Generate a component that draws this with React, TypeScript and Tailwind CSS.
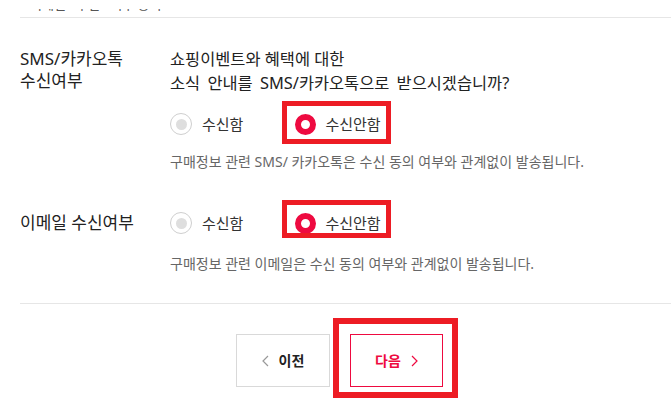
import React from "react";

const font = { fontFamily: '"Noto Sans", "Noto Sans CJK KR", sans-serif' };

function RadioOff({ label }: { label: string }) {
  return (
    <div className="flex items-center gap-[10px]">
      <span className="flex h-[22px] w-[22px] items-center justify-center rounded-full border border-[#cfcfcf] bg-white">
        <span className="h-[11px] w-[11px] rounded-full bg-[#dedede]" />
      </span>
      <span className="text-[15px] text-[#333]">{label}</span>
    </div>
  );
}

function RadioOn({ label, boxClass }: { label: string; boxClass: string }) {
  return (
    <div className="relative flex items-center gap-[9px]">
      <span className="h-[21px] w-[21px] rounded-full border-[6px] border-[#ee0a40] bg-white" />
      <span className="text-[15px] text-[#333]">{label}</span>
      <span className={`pointer-events-none absolute border-[5px] border-[#ed1c24] ${boxClass}`} />
    </div>
  );
}

function Chevron({ dir, color }: { dir: "l" | "r"; color: string }) {
  return (
    <svg width="7" height="12" viewBox="0 0 7 12" fill="none">
      <polyline
        points={dir === "l" ? "6,1 1,6 6,11" : "1,1 6,6 1,11"}
        stroke={color}
        strokeWidth="1.2"
      />
    </svg>
  );
}

export default function App() {
  return (
    <div className="h-[404px] w-[671px] overflow-hidden bg-white" style={font}>
      <div className="pl-5">
        <div className="h-[9px]" />
        <div className="flex h-[2px] items-end overflow-hidden pl-[10px]">
          <span className="text-[13px] leading-none text-[#555]">이메일 · 수신 · 여부 동의</span>
        </div>
        <div className="h-[6px]" />
        <div className="border-t border-[#e6e6e6]" />

        <div className="flex pt-[29px]">
          <div className="w-[150px] pt-[1px] text-[17px] leading-[22px] text-[#222]">
            SMS/카카오톡
            <br />
            수신여부
          </div>
          <div className="flex flex-col">
            <div className="text-[16.4px] leading-[24px] text-[#222]">
              <div>쇼핑이벤트와 혜택에 대한</div>
              <div className="[word-spacing:3px]">소식 안내를 SMS/카카오톡으로 받으시겠습니까?</div>
            </div>
            <div className="mt-[14px] flex h-[30px] items-center gap-[52px]">
              <RadioOff label="수신함" />
              <RadioOn label="수신안함" boxClass="-left-[13px] -right-[10px] -top-[12px] -bottom-[9px]" />
            </div>
            <div className="mt-[13px] text-[14px] leading-[20px] text-[#666]">
              구매정보 관련 SMS/ 카카오톡은 수신 동의 여부와 관계없이 발송됩니다.
            </div>
          </div>
        </div>

        <div className="flex pt-[36px] pb-[29px]">
          <div className="w-[150px] text-[17px] leading-[30px] text-[#222]">이메일 수신여부</div>
          <div className="flex flex-col">
            <div className="flex h-[30px] items-center gap-[52px]">
              <RadioOff label="수신함" />
              <RadioOn label="수신안함" boxClass="-left-[13px] -right-[10px] -top-[12px] -bottom-[4px]" />
            </div>
            <div className="mt-[16px] text-[14px] leading-[20px] text-[#666]">
              구매정보 관련 이메일은 수신 동의 여부와 관계없이 발송됩니다.
            </div>
          </div>
        </div>
        <div className="border-t border-[#e6e6e6]" />
      </div>

      <div className="mt-[30px] flex justify-center gap-[20px] pl-[8px]">
        <button className="flex h-[53px] w-[94px] items-center justify-center gap-[10px] border border-[#d9d9d9] bg-white">
          <Chevron dir="l" color="#999" />
          <span className="text-[14px] font-bold text-[#222]">이전</span>
        </button>
        <div className="relative">
          <button className="flex h-[53px] w-[93px] items-center justify-center gap-[10px] border border-[#ee0a40] bg-white">
            <span className="text-[14px] font-bold text-[#ee0a40]">다음</span>
            <Chevron dir="r" color="#ee0a40" />
          </button>
          <span className="pointer-events-none absolute -left-[17px] -right-[15px] -top-[16px] -bottom-[11px] border-[6px] border-[#ed1c24]" />
        </div>
      </div>
    </div>
  );
}
